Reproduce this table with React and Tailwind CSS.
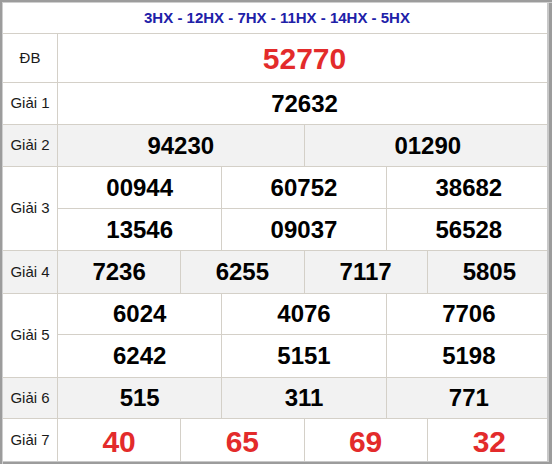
const rows = [
  { label: 'ĐB', hs: ['h-[48px]'], lines: [['52770']], red: true },
  { label: 'Giải 1', hs: ['h-[41px]'], lines: [['72632']] },
  { label: 'Giải 2', hs: ['h-[41px]'], lines: [['94230', '01290']], gray: true },
  { label: 'Giải 3', hs: ['h-[42px]', 'h-[41px]'], lines: [['00944', '60752', '38682'], ['13546', '09037', '56528']] },
  { label: 'Giải 4', hs: ['h-[42px]'], lines: [['7236', '6255', '7117', '5805']], gray: true },
  { label: 'Giải 5', hs: ['h-[41px]', 'h-[42px]'], lines: [['6024', '4076', '7706'], ['6242', '5151', '5198']] },
  { label: 'Giải 6', hs: ['h-[40px]'], lines: [['515', '311', '771']], gray: true },
  { label: 'Giải 7', hs: ['h-[43px]'], lines: [['40', '65', '69', '32']], red: true },
];

const gridCols = {
  1: 'grid-cols-1',
  2: 'grid-cols-2',
  3: 'grid-cols-3',
  4: 'grid-cols-4',
};

function PrizeRow({ row }) {
  const numClass = row.red ? 'text-[30px] text-[#e32b2b]' : 'text-[24px] text-black';

  return (
    <div className={`flex border-b border-[#d4d0c8] ${row.gray ? 'bg-[#f2f2f2]' : 'bg-white'}`}>
      <div className="w-[55px] shrink-0 border-r border-[#d4d0c8] flex items-center justify-center text-[15px] text-[#1a1a1a]">
        {row.label}
      </div>
      <div className="flex-1 flex flex-col">
        {row.lines.map((line, i) => (
          <div
            key={i}
            className={`grid ${gridCols[line.length]} ${row.hs[i]} ${i < row.lines.length - 1 ? 'border-b border-[#d4d0c8]' : ''}`}
          >
            {line.map((n, j) => (
              <div
                key={j}
                className={`flex items-center justify-center font-bold ${numClass} ${j < line.length - 1 ? 'border-r border-[#d4d0c8]' : ''}`}
              >
                {n}
              </div>
            ))}
          </div>
        ))}
      </div>
    </div>
  );
}

export default function App() {
  return (
    <div
      className="relative w-[552px] h-[464px] bg-white overflow-hidden pt-[3px] pl-[3px] pr-[1px]"
      style={{ fontFamily: '"Liberation Sans", Arial, sans-serif' }}
    >
      {/* Header */}
      <div className="h-[31px] border-b border-[#d4d0c8] flex items-center justify-center text-[15px] font-bold text-[#2020a8]">
        3HX - 12HX - 7HX - 11HX - 14HX - 5HX
      </div>

      {rows.map((row) => (
        <PrizeRow key={row.label} row={row} />
      ))}

      {/* frame */}
      <div className="pointer-events-none absolute inset-0 shadow-[inset_2px_2px_0_#9c9c9c,inset_3px_3px_0_#cfcfcf,inset_-3px_-2px_0_#9c9c9c,inset_-5px_-3px_0_#c8c8c8]" />
    </div>
  );
}
